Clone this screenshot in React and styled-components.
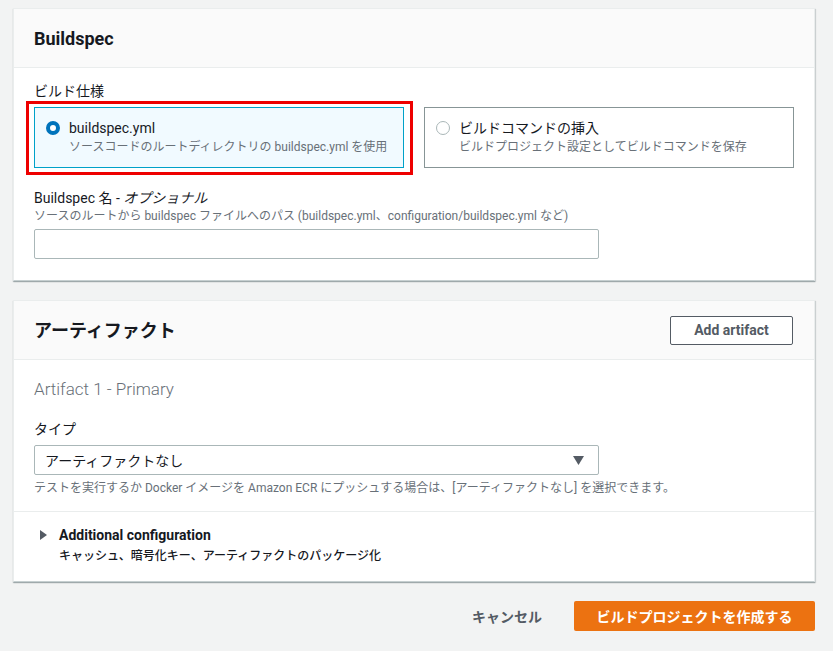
import React from 'react';
import styled, { createGlobalStyle } from 'styled-components';

const GlobalStyle = createGlobalStyle`
  html, body {
    margin: 0;
    padding: 0;
    background: #f2f3f3;
  }
  body {
    font-family: Roboto, "Noto Sans CJK JP", sans-serif;
    color: #16191f;
  }
`;

const Page = styled.div`
  padding: 8px 18px 20px 13px;
  display: flex;
  flex-direction: column;
  gap: 19px;
  width: 802px;
`;

const Card = styled.section`
  background: #fff;
  border: 1px solid #eaeded;
  border-bottom-color: #c6cfd0;
  box-shadow: 0 1px 1px 0 rgba(0, 28, 36, 0.25), 1px 1px 1px 0 rgba(0, 28, 36, 0.12);
`;

const CardHeader = styled.div`
  display: flex;
  align-items: center;
  justify-content: space-between;
  height: 58px;
  padding: 0 20px;
  background: #fafafa;
  border-bottom: 1px solid #eaeded;
`;

const CardTitle = styled.h2`
  margin: 0;
  padding-top: 1px;
  font-size: 18px;
  font-weight: 700;
  line-height: 24px;
`;

const CardBody = styled.div`
  padding: ${(p) => p.$pad || '13px 20px 21px'};
`;

const Label = styled.div`
  font-size: 14px;
  line-height: ${(p) => (p.$lh ? p.$lh : '20px')};
  margin-top: ${(p) => p.$mt || '0'};
  color: #16191f;
  i {
    font-style: italic;
  }
`;

const Hint = styled.div`
  font-size: 12px;
  line-height: 16px;
  color: #687078;
  margin-top: ${(p) => p.$mt || '0'};
`;

const TileRow = styled.div`
  display: grid;
  grid-template-columns: 370px 370px;
  gap: 20px;
  margin-top: 6px;
`;

const Tile = styled.div`
  position: relative;
  display: flex;
  align-items: flex-start;
  gap: 9px;
  height: 61px;
  box-sizing: border-box;
  padding: 10px 12px 0 11px;
  border: 1px solid ${(p) => (p.$selected ? '#00a1c9' : '#879596')};
  background: ${(p) => (p.$selected ? '#f1faff' : '#fff')};
`;

const Highlight = styled.div`
  position: absolute;
  top: -7px;
  left: -9px;
  right: -10px;
  bottom: -8px;
  border: 3px solid #ee0000;
  pointer-events: none;
`;

const Radio = styled.span`
  flex: none;
  width: 14px;
  height: 14px;
  margin-top: 3px;
  box-sizing: border-box;
  border-radius: 50%;
  border: ${(p) => (p.$checked ? '4px solid #0073bb' : '1.5px solid #aab7b8')};
  background: #fff;
`;

const TileText = styled.div`
  display: flex;
  flex-direction: column;
`;

const TileTitle = styled.div`
  font-size: 14px;
  line-height: 20px;
`;

const TileDesc = styled.div`
  font-size: 12px;
  line-height: 18px;
  color: #687078;
`;

const TextInput = styled.div`
  width: 565px;
  height: 30px;
  box-sizing: border-box;
  margin-top: 5px;
  border: 1px solid #aab7b8;
  border-radius: 2px;
  background: #fff;
`;

const Select = styled.div`
  display: flex;
  align-items: center;
  justify-content: space-between;
  width: 565px;
  height: 30px;
  box-sizing: border-box;
  margin-top: 6px;
  padding: 0 14px 0 10px;
  border: 1px solid #aab7b8;
  border-radius: 2px;
  font-size: 14px;
  color: #16191f;
`;

const SubTitle = styled.div`
  font-size: 17px;
  line-height: 24px;
  font-weight: 300;
  color: #687078;
`;

const OutlineButton = styled.button`
  height: 29px;
  width: 123px;
  padding: 0;
  border: 1px solid #545b64;
  border-radius: 2px;
  background: #fff;
  color: #545b64;
  font-family: inherit;
  font-size: 14px;
  font-weight: 700;
  margin-right: 1px;
`;

const Divider = styled.hr`
  margin: 0;
  border: 0;
  border-top: 1px solid #eaeded;
`;

const Expander = styled.div`
  padding: 13px 20px 17px 26px;
`;

const ExpanderHead = styled.div`
  display: flex;
  align-items: center;
  gap: 12px;
  font-size: 14px;
  font-weight: 700;
  line-height: 20px;
  color: #16191f;
`;

const ExpanderDesc = styled.div`
  margin-top: 3px;
  padding-left: 19px;
  font-size: 12px;
  line-height: 16px;
  font-weight: 500;
  color: #16191f;
`;

const Footer = styled.div`
  display: flex;
  justify-content: flex-end;
  align-items: center;
  gap: 12px;
`;

const LinkButton = styled.button`
  border: 0;
  background: none;
  padding: 4px 20px;
  font-family: inherit;
  font-size: 14px;
  font-weight: 700;
  color: #545b64;
`;

const PrimaryButton = styled.button`
  height: 30px;
  width: 241px;
  border: 0;
  border-radius: 2px;
  background: #ec7211;
  color: #fff;
  font-family: inherit;
  font-size: 14px;
  font-weight: 700;
`;

const Caret = ({ dir }) =>
  dir === 'down' ? (
    <svg width="11" height="9" viewBox="0 0 11 9">
      <polygon points="0,0 11,0 5.5,9" fill="#545b64" />
    </svg>
  ) : (
    <svg width="7" height="10" viewBox="0 0 7 10">
      <polygon points="0,0 7,5 0,10" fill="#545b64" />
    </svg>
  );

export default function App() {
  return (
    <>
      <GlobalStyle />
      <Page>
        <Card>
          <CardHeader>
            <CardTitle>Buildspec</CardTitle>
          </CardHeader>
          <CardBody>
            <Label>ビルド仕様</Label>
            <TileRow>
              <Tile $selected>
                <Highlight />
                <Radio $checked />
                <TileText>
                  <TileTitle>buildspec.yml</TileTitle>
                  <TileDesc>ソースコードのルートディレクトリの buildspec.yml を使用</TileDesc>
                </TileText>
              </Tile>
              <Tile>
                <Radio />
                <TileText>
                  <TileTitle>ビルドコマンドの挿入</TileTitle>
                  <TileDesc>ビルドプロジェクト設定としてビルドコマンドを保存</TileDesc>
                </TileText>
              </Tile>
            </TileRow>
            <Label $mt="21px" $lh="18px">
              Buildspec 名 - <i>オプショナル</i>
            </Label>
            <Hint $mt="1px">ソースのルートから buildspec ファイルへのパス (buildspec.yml、configuration/buildspec.yml など)</Hint>
            <TextInput />
          </CardBody>
        </Card>

        <Card>
          <CardHeader>
            <CardTitle>アーティファクト</CardTitle>
            <OutlineButton>Add artifact</OutlineButton>
          </CardHeader>
          <CardBody $pad="17px 20px 15px">
            <SubTitle>Artifact 1 - Primary</SubTitle>
            <Label $mt="18px">タイプ</Label>
            <Select>
              <span>アーティファクトなし</span>
              <Caret dir="down" />
            </Select>
            <Hint $mt="5px">
              テストを実行するか Docker イメージを Amazon ECR にプッシュする場合は、[アーティファクトなし] を選択できます。
            </Hint>
          </CardBody>
          <Divider />
          <Expander>
            <ExpanderHead>
              <Caret dir="right" />
              Additional configuration
            </ExpanderHead>
            <ExpanderDesc>キャッシュ、暗号化キー、アーティファクトのパッケージ化</ExpanderDesc>
          </Expander>
        </Card>

        <Footer>
          <LinkButton>キャンセル</LinkButton>
          <PrimaryButton>ビルドプロジェクトを作成する</PrimaryButton>
        </Footer>
      </Page>
    </>
  );
}
